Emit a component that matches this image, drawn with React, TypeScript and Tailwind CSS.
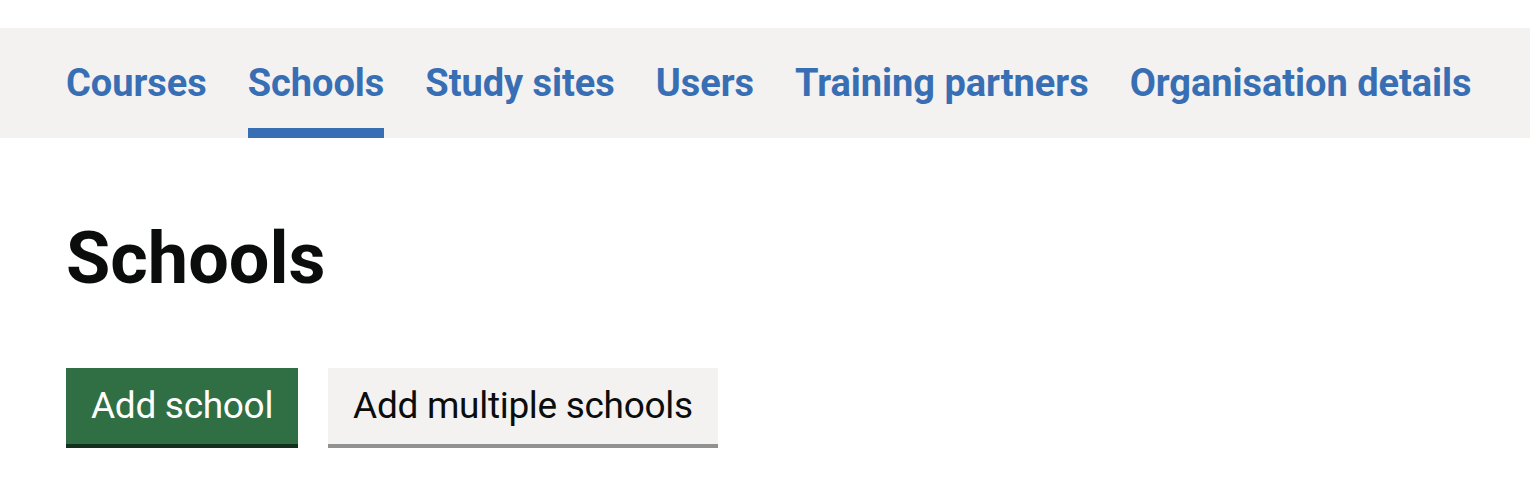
import React from 'react';

const navItems = [
  { label: 'Courses', active: false },
  { label: 'Schools', active: true },
  { label: 'Study sites', active: false },
  { label: 'Users', active: false },
  { label: 'Training partners', active: false },
  { label: 'Organisation details', active: false },
];

const App: React.FC = () => {
  return (
    <div className="min-h-[502px] bg-white pt-[28px] font-['Roboto',sans-serif] text-[#0b0c0c]">
      {/* Service navigation */}
      <nav className="bg-[#f3f2f1]">
        <ul className="flex gap-[41px] px-[66px]">
          {navItems.map((item) => (
            <li key={item.label} className="flex flex-col whitespace-nowrap">
              <a
                href="#"
                className="block pt-[30px] pb-[20px] text-[38px] leading-[50px] tracking-[-0.05px] font-bold text-[#386fb4]"
              >
                {item.label}
              </a>
              <span className={`h-[10px] ${item.active ? 'bg-[#386fb4]' : 'bg-transparent'}`} />
            </li>
          ))}
        </ul>
      </nav>

      {/* Main */}
      <main className="px-[66px]">
        <h1 className="mt-[81px] text-[72px] leading-[80px] font-bold">Schools</h1>

        <div className="mt-[69px] flex gap-[30px]">
          <button
            type="button"
            className="h-[76px] px-[25px] text-[37px] tracking-[-0.3px] leading-[76px] text-white bg-[#2f6f43] shadow-[0_4px_0_#12301c]"
          >
            Add school
          </button>
          <button
            type="button"
            className="h-[76px] px-[25px] text-[37px] tracking-[-0.3px] leading-[76px] text-[#0b0c0c] bg-[#f3f2f1] shadow-[0_4px_0_#929191]"
          >
            Add multiple schools
          </button>
        </div>
      </main>
    </div>
  );
};

export default App;
